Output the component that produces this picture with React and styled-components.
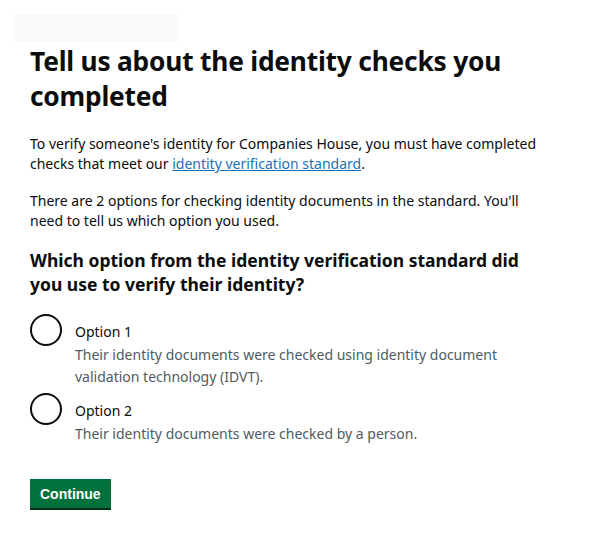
import React from "react";
import styled, { createGlobalStyle } from "styled-components";

const GlobalStyle = createGlobalStyle`
  html, body {
    margin: 0;
    padding: 0;
    background: #ffffff;
  }
  body {
    font-family: "Noto Sans", "Liberation Sans", Arial, sans-serif;
    color: #0b0c0c;
  }
`;

const Page = styled.div`
  width: 597px;
  min-height: 546px;
  box-sizing: border-box;
  padding: 14px 0 0 15px;
`;

const BackBar = styled.div`
  width: 163px;
  height: 28px;
  background: #fafafa;
`;

const Main = styled.main`
  padding-left: 15px;
  width: 515px;
`;

const Heading = styled.h1`
  margin: 2px 0 20px;
  font-size: 26.3px;
  line-height: 35px;
  font-weight: 700;
  letter-spacing: -0.2px;
`;

const Body = styled.p`
  margin: 0 0 17px;
  font-size: 14px;
  line-height: 20px;
`;

const Link = styled.a`
  color: #1d70b8;
  text-decoration: underline;
  text-underline-offset: 1px;
`;

const Fieldset = styled.fieldset`
  margin: 1px 0 0;
  padding: 0;
  border: 0;
`;

const Legend = styled.legend`
  padding: 0;
  margin: 0 0 18px;
  font-size: 17.5px;
  line-height: 24px;
  font-weight: 700;
`;

const Options = styled.div`
  display: flex;
  flex-direction: column;
  gap: 5px;
`;

const Item = styled.label`
  display: grid;
  grid-template-columns: 32px 1fr;
  column-gap: 13px;
  align-items: start;
  cursor: pointer;
`;

const Circle = styled.span`
  width: 32px;
  height: 32px;
  box-sizing: border-box;
  border: 2px solid #0b0c0c;
  border-radius: 50%;
`;

const ItemText = styled.div`
  display: flex;
  flex-direction: column;
  padding-top: 8px;
`;

const ItemLabel = styled.span`
  font-size: 14px;
  line-height: 20px;
`;

const Hint = styled.span`
  font-size: 14px;
  line-height: 22px;
  color: #505a5f;
  margin-top: 2px;
`;

const Button = styled.button`
  display: block;
  margin-top: 34px;
  padding: 0 10px;
  height: 29px;
  border: 0;
  border-radius: 0;
  background: #00703c;
  box-shadow: 0 2px 0 #002d18;
  color: #ffffff;
  font-family: "Liberation Sans", Arial, sans-serif;
  font-size: 14px;
  font-weight: 700;
  cursor: pointer;
`;

const options = [
  {
    label: "Option 1",
    hint: "Their identity documents were checked using identity document validation technology (IDVT).",
  },
  {
    label: "Option 2",
    hint: "Their identity documents were checked by a person.",
  },
];

export default function App() {
  return (
    <>
      <GlobalStyle />
      <Page>
        <BackBar />
        <Main>
          <Heading>Tell us about the identity checks you completed</Heading>
          <Body>
            To verify someone's identity for Companies House, you must have completed
            checks that meet our <Link href="#">identity verification standard</Link>.
          </Body>
          <Body>
            There are 2 options for checking identity documents in the standard. You'll
            need to tell us which option you used.
          </Body>
          <Fieldset>
            <Legend>
              Which option from the identity verification standard did you use to verify
              their identity?
            </Legend>
            <Options>
              {options.map((opt) => (
                <Item key={opt.label}>
                  <Circle />
                  <ItemText>
                    <ItemLabel>{opt.label}</ItemLabel>
                    <Hint>{opt.hint}</Hint>
                  </ItemText>
                </Item>
              ))}
            </Options>
          </Fieldset>
          <Button type="button">Continue</Button>
        </Main>
      </Page>
    </>
  );
}
